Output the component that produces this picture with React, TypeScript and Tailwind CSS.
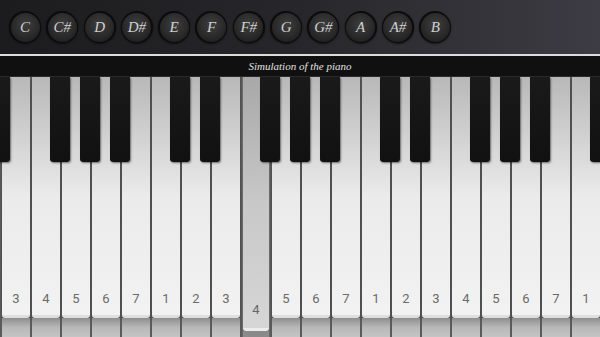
import React from "react";

const notes = ["C", "C#", "D", "D#", "E", "F", "F#", "G", "G#", "A", "A#", "B"];
const whiteLabels = ["3","4","5","6","7","1","2","3","4","5","6","7","1","2","3","4","5","6","7","1"];
const blackLefts = [-10, 50, 80, 110, 170, 200, 260, 290, 320, 380, 410, 470, 500, 530, 590];

export default function App() {
  return (
    <div className="w-[600px] h-[337px] overflow-hidden bg-black flex flex-col">
      <div className="h-[54px] shrink-0 bg-gradient-to-r from-[#1c1c1e] via-[#27272b] to-[#3d3c44] flex items-center pl-[9px] gap-[5.3px]">
        {notes.map((n) => (
          <div
            key={n}
            className="w-[32px] h-[32px] rounded-full bg-[#0c0c0c] p-[1.5px] shadow-[0_1px_2px_rgba(0,0,0,0.6)]"
          >
            <div className="w-full h-full rounded-full bg-[radial-gradient(circle_at_50%_40%,#3e3e3e_0%,#2a2a2a_55%,#161616_100%)] flex items-center justify-center">
              <span
                className="italic text-[15px] leading-none text-[#cfcfcf]"
                style={{ fontFamily: '"Liberation Serif", serif' }}
              >
                {n}
              </span>
            </div>
          </div>
        ))}
      </div>
      <div className="h-[2px] shrink-0 bg-[#dcdcdc]" />
      <div className="h-[21px] shrink-0 bg-[#101010] flex items-center justify-center border-b border-[#2a2a2a]">
        <span
          className="italic text-[11px] text-[#e0e0e0]"
          style={{ fontFamily: '"Liberation Serif", serif' }}
        >
          Simulation of the piano
        </span>
      </div>
      <div className="relative flex-1 flex bg-[#5a5a5a]">
        {whiteLabels.map((l, i) => {
          const pressed = i === 8;
          return (
            <div key={i} className="w-[30px] h-full flex flex-col pl-[2px]">
              {pressed ? (
                <div className="flex-1 flex flex-col bg-[#6a6a6a] px-[1px]">
                  <div className="flex-1 bg-gradient-to-b from-[#a8a8a8] via-[#c8c8c8] to-[#d6d6d6] rounded-b-[3px] flex items-end justify-center pb-[9px] border-b-[3px] border-[#ececec]">
                    <span className="text-[13px] text-[#666]" style={{ fontFamily: "Roboto, sans-serif" }}>{l}</span>
                  </div>
                  <div className="h-[6px] bg-[#8a8a8a]" />
                </div>
              ) : (
                <>
                  <div className="flex-1 bg-gradient-to-b from-[#b8b8b8] via-[#ebebeb] to-[#f2f2f2] rounded-b-[3px] flex items-end justify-center pb-[7px] border-b-[3px] border-[#dedede] shadow-[0_2px_2px_rgba(0,0,0,0.35)]">
                    <span className="text-[13px] text-[#6a6a6a]" style={{ fontFamily: "Roboto, sans-serif" }}>{l}</span>
                  </div>
                  <div className="h-[19px] bg-gradient-to-b from-[#8e8e8e] via-[#b8b8b8] to-[#c4c4c4]" />
                </>
              )}
            </div>
          );
        })}
        {blackLefts.map((x) => (
          <div
            key={x}
            className="absolute top-0 w-[20px] h-[85px] rounded-b-[3px] bg-gradient-to-b from-[#1a1a1a] to-[#111111] shadow-[1px_1px_2px_rgba(0,0,0,0.5)]"
            style={{ left: x }}
          />
        ))}
      </div>
    </div>
  );
}
